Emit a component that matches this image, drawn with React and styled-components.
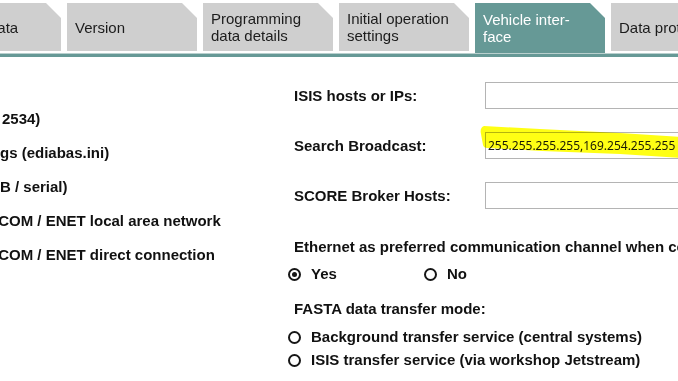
import React from "react";
import styled, { createGlobalStyle } from "styled-components";

const GlobalStyle = createGlobalStyle`
  html, body {
    margin: 0;
    padding: 0;
    background: #ffffff;
    overflow: hidden;
  }
  body {
    font-family: "Liberation Sans", Arial, sans-serif;
    color: #111111;
  }
`;

const Screen = styled.div`
  width: 678px;
  height: 381px;
  overflow: hidden;
  background: #ffffff;
`;

// the settings dialog is scrolled a bit to the right, so the first tab is cut
const TabStrip = styled.div`
  display: flex;
  align-items: flex-start;
  gap: 6px;
  height: 53px;
  padding-top: 3px;
  margin-left: -69px;
  box-sizing: border-box;
`;

const Tab = styled.div`
  flex: none;
  width: 130px;
  height: ${(p) => (p.$active ? 50 : 48)}px;
  box-sizing: border-box;
  padding: 0 8px;
  display: flex;
  align-items: center;
  background: ${(p) => (p.$active ? "#669996" : "#cfcfcf")};
  color: ${(p) => (p.$active ? "#ffffff" : "#1c1c1c")};
  font-size: 15px;
  line-height: 17px;
  clip-path: polygon(0 0, calc(100% - 15px) 0, 100% 15px, 100% 100%, 0 100%);
`;

const TabRule = styled.div`
  height: 3px;
  background: #669996;
  border-top: 1px solid #b9d0ce;
`;

const Content = styled.div`
  display: flex;
  padding-top: 25px;
`;

const InterfaceList = styled.div`
  flex: none;
  width: 288px;
  padding-top: 20px;
  overflow: hidden;
`;

const InterfaceItem = styled.div`
  font-size: 15px;
  font-weight: 700;
  line-height: 34px;
  white-space: nowrap;
  text-indent: ${(p) => p.$cut || 0}px;
`;

const Settings = styled.div`
  flex: 1;
  min-width: 0;
`;

const FieldRow = styled.div`
  display: grid;
  grid-template-columns: 197px 260px;
  align-items: center;
  height: 27px;
  margin-bottom: 23px;

  &:last-child {
    margin-bottom: 0;
  }
`;

const FieldLabel = styled.label`
  padding-left: 6px;
  font-size: 15px;
  font-weight: 700;
  white-space: nowrap;
`;

const FieldBox = styled.div`
  position: relative;
  height: 27px;
`;

const TextBox = styled.input`
  width: 100%;
  height: 27px;
  box-sizing: border-box;
  margin: 0;
  padding: 0 2px 1px;
  border: 1px solid #b4b4b4;
  border-radius: 0;
  background: #ffffff;
  font-family: "Noto Sans", "Open Sans", sans-serif;
  font-size: 12px;
  color: #1a1a1a;
  outline: none;
`;

const Marker = styled.svg`
  position: absolute;
  left: -5px;
  top: -8px;
  width: 200px;
  height: 34px;
  mix-blend-mode: multiply;
  pointer-events: none;
`;

const Question = styled.div`
  margin-top: ${(p) => p.$gap}px;
  padding-left: 6px;
  font-size: 15px;
  font-weight: 700;
  line-height: 18px;
  white-space: nowrap;
`;

const ChoiceRow = styled.div`
  display: flex;
  margin-top: 9px;
`;

const ChoiceStack = styled.div`
  display: flex;
  flex-direction: column;
  gap: 5px;
  margin-top: 10px;
`;

const Choice = styled.div`
  display: flex;
  align-items: center;
  gap: 10px;
  width: ${(p) => (p.$width ? `${p.$width}px` : "auto")};
  font-size: 15px;
  font-weight: 700;
  line-height: 18px;
  white-space: nowrap;
`;

const Radio = styled.span`
  flex: none;
  width: 13px;
  height: 13px;
  box-sizing: border-box;
  border: 2px solid #161616;
  border-radius: 50%;
  display: flex;
  align-items: center;
  justify-content: center;

  &::after {
    content: "";
    width: 5px;
    height: 5px;
    border-radius: 50%;
    background: ${(p) => (p.$checked ? "#161616" : "transparent")};
  }
`;

const tabs = [
  { label: "Master data" },
  { label: "Version" },
  { label: "Programming data details" },
  { label: "Initial operation settings" },
  { label: "Vehicle inter-face", active: true },
  { label: "Data protection" },
];

const interfaces = [
  { text: "2534)", cut: 2 },
  { text: "gs (ediabas.ini)", cut: 0 },
  { text: "B / serial)", cut: 0 },
  { text: "ICOM / ENET local area network", cut: -6 },
  { text: "ICOM / ENET direct connection", cut: -6 },
];

const fields = [
  { label: "ISIS hosts or IPs:", value: "" },
  { label: "Search Broadcast:", value: "255.255.255.255,169.254.255.255", marked: true },
  { label: "SCORE Broker Hosts:", value: "" },
];

export default function App() {
  return (
    <>
      <GlobalStyle />
      <Screen>
        <TabStrip>
          {tabs.map((t) => (
            <Tab key={t.label} $active={t.active}>
              {t.label}
            </Tab>
          ))}
        </TabStrip>
        <TabRule />

        <Content>
          <InterfaceList>
            {interfaces.map((i) => (
              <InterfaceItem key={i.text} $cut={i.cut}>
                {i.text}
              </InterfaceItem>
            ))}
          </InterfaceList>

          <Settings>
            <div>
              {fields.map((f) => (
                <FieldRow key={f.label}>
                  <FieldLabel>{f.label}</FieldLabel>
                  <FieldBox>
                    <TextBox readOnly value={f.value} />
                    {f.marked && (
                      <Marker viewBox="0 0 200 34">
                        <path
                          d="M4 2 C1 3 0 6 1 10 L3 21 C4 24 6 24 8 24 L62 27 L140 30 L200 34 L200 13 L140 9 L60 5 Z"
                          fill="#ffff14"
                        />
                      </Marker>
                    )}
                  </FieldBox>
                </FieldRow>
              ))}
            </div>

            <Question $gap={29}>
              Ethernet as preferred communication channel when connected to both
            </Question>
            <ChoiceRow>
              <Choice $width={136}>
                <Radio $checked />
                Yes
              </Choice>
              <Choice $width={136}>
                <Radio />
                No
              </Choice>
            </ChoiceRow>

            <Question $gap={17}>FASTA data transfer mode:</Question>
            <ChoiceStack>
              <Choice>
                <Radio />
                Background transfer service (central systems)
              </Choice>
              <Choice>
                <Radio />
                ISIS transfer service (via workshop Jetstream)
              </Choice>
            </ChoiceStack>
          </Settings>
        </Content>
      </Screen>
    </>
  );
}
